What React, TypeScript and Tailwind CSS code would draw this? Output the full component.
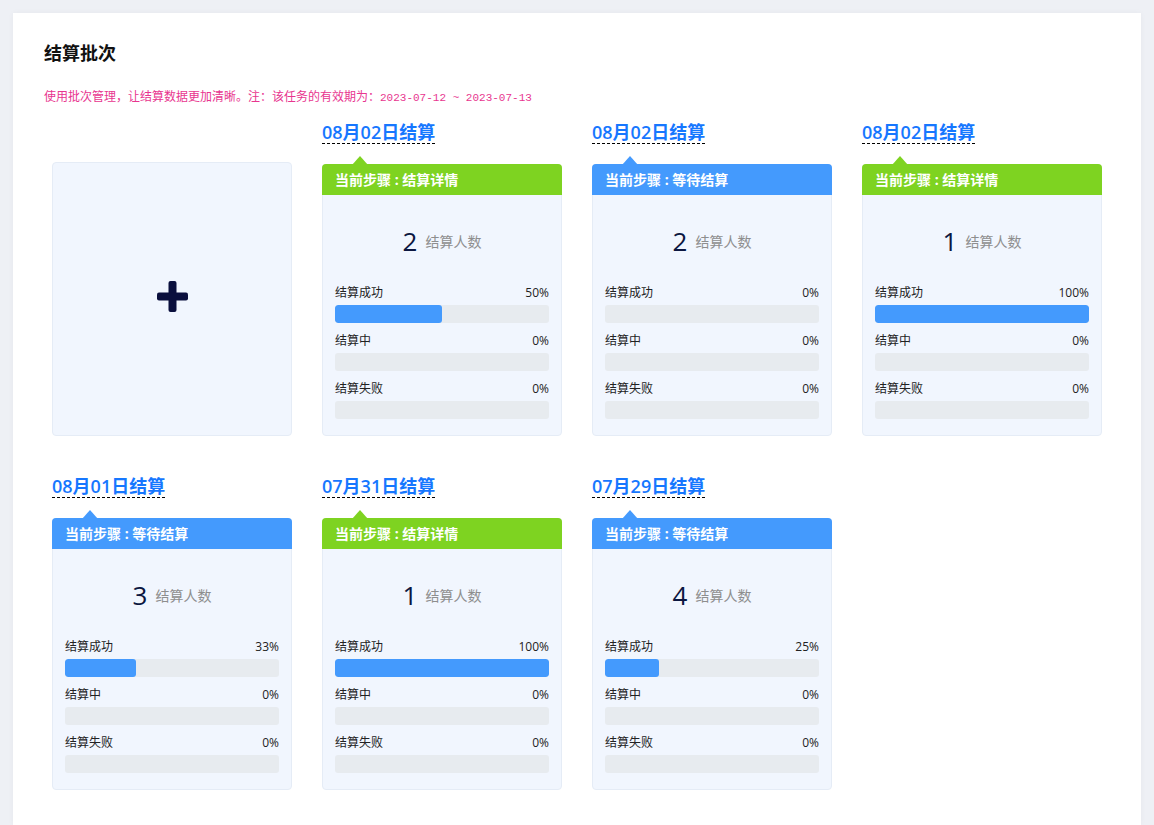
import React from "react";

type Item = {
  date: string;
  step: "detail" | "wait";
  count: number;
  success: number;
  doing: number;
  fail: number;
};

const items: Item[] = [
  { date: "08月02日结算", step: "detail", count: 2, success: 50, doing: 0, fail: 0 },
  { date: "08月02日结算", step: "wait", count: 2, success: 0, doing: 0, fail: 0 },
  { date: "08月02日结算", step: "detail", count: 1, success: 100, doing: 0, fail: 0 },
  { date: "08月01日结算", step: "wait", count: 3, success: 33, doing: 0, fail: 0 },
  { date: "07月31日结算", step: "detail", count: 1, success: 100, doing: 0, fail: 0 },
  { date: "07月29日结算", step: "wait", count: 4, success: 25, doing: 0, fail: 0 },
];

const font = { fontFamily: '"Open Sans", "Noto Sans CJK SC", sans-serif' };

function Row({ label, pct }: { label: string; pct: number }) {
  return (
    <div className="flex flex-col">
      <div className="flex justify-between text-[12px] leading-[20px] text-[#222]">
        <span>{label}</span>
        <span>{pct}%</span>
      </div>
      <div className="mt-[2px] h-[18px] rounded-[3px] bg-[#e7ebef] overflow-hidden">
        {pct > 0 && <div className="h-full rounded-[3px] bg-[#449afd]" style={{ width: `${pct}%` }} />}
      </div>
    </div>
  );
}

function Card({ item }: { item: Item }) {
  const green = item.step === "detail";
  return (
    <div className="flex flex-col items-start">
      <div className="inline-block border-b border-dashed border-black text-[18px] leading-[22px] font-semibold text-[#1677ff]">
        {item.date}
      </div>
      <div className="relative mt-[20px] w-[240px] rounded-[4px] border border-[#e5ecf6] bg-[#f1f6fe]">
        <div
          className={`absolute left-[29px] top-[-9px] h-0 w-0 border-x-[8px] border-b-[9px] border-x-transparent ${
            green ? "border-b-[#7ed321]" : "border-b-[#449afd]"
          }`}
        />
        <div
          className={`-mx-px -mt-px h-[31px] rounded-t-[4px] pl-[13px] text-[14px] font-bold leading-[32px] text-white ${
            green ? "bg-[#7ed321]" : "bg-[#449afd]"
          }`}
        >
          {green ? "当前步骤 : 结算详情" : "当前步骤 : 等待结算"}
        </div>
        <div className="flex h-[88px] items-center justify-center pt-[4px]">
          <span className="text-[26px] leading-[30px] text-[#0b1640]">{item.count}</span>
          <span className="ml-[8px] text-[14px] text-[#8e8e8e]">结算人数</span>
        </div>
        <div className="flex flex-col gap-[8px] px-[12px] pb-[16px]">
          <Row label="结算成功" pct={item.success} />
          <Row label="结算中" pct={item.doing} />
          <Row label="结算失败" pct={item.fail} />
        </div>
      </div>
    </div>
  );
}

export default function App() {
  return (
    <div className="min-h-[825px] bg-[#eef0f5] px-[13px] pt-[13px]" style={font}>
      <div className="min-h-[812px] bg-white shadow-[0_0_6px_rgba(0,0,0,0.04)]">
        <div className="pl-[31px] pt-[26px]">
          <div className="text-[18px] font-bold leading-[28px] text-[#111]">结算批次</div>
          <div className="mt-[22px] text-[12px] leading-[16px] text-[#e8368f]">
            使用批次管理，让结算数据更加清晰。注：该任务的有效期为：
            <span className="text-[11px]" style={{ fontFamily: '"Liberation Mono", monospace' }}>
              2023-07-12 ~ 2023-07-13
            </span>
          </div>
        </div>
        <div className="mt-[15px] grid grid-cols-[repeat(4,240px)] gap-x-[30px] gap-y-[39px] px-[39px] pb-[34px]">
          <div className="flex items-end">
            <div className="flex h-[274px] w-[240px] items-center justify-center rounded-[4px] border border-[#e5ecf6] bg-[#f1f6fe] pb-[5px]">
              <svg width="33" height="33" viewBox="0 0 33 33">
                <rect x="12.5" y="1" width="8" height="31" rx="2" fill="#0a0f3d" />
                <rect x="1" y="12.5" width="31" height="8" rx="2" fill="#0a0f3d" />
              </svg>
            </div>
          </div>
          {items.map((it, i) => (
            <Card key={i} item={it} />
          ))}
        </div>
      </div>
    </div>
  );
}
